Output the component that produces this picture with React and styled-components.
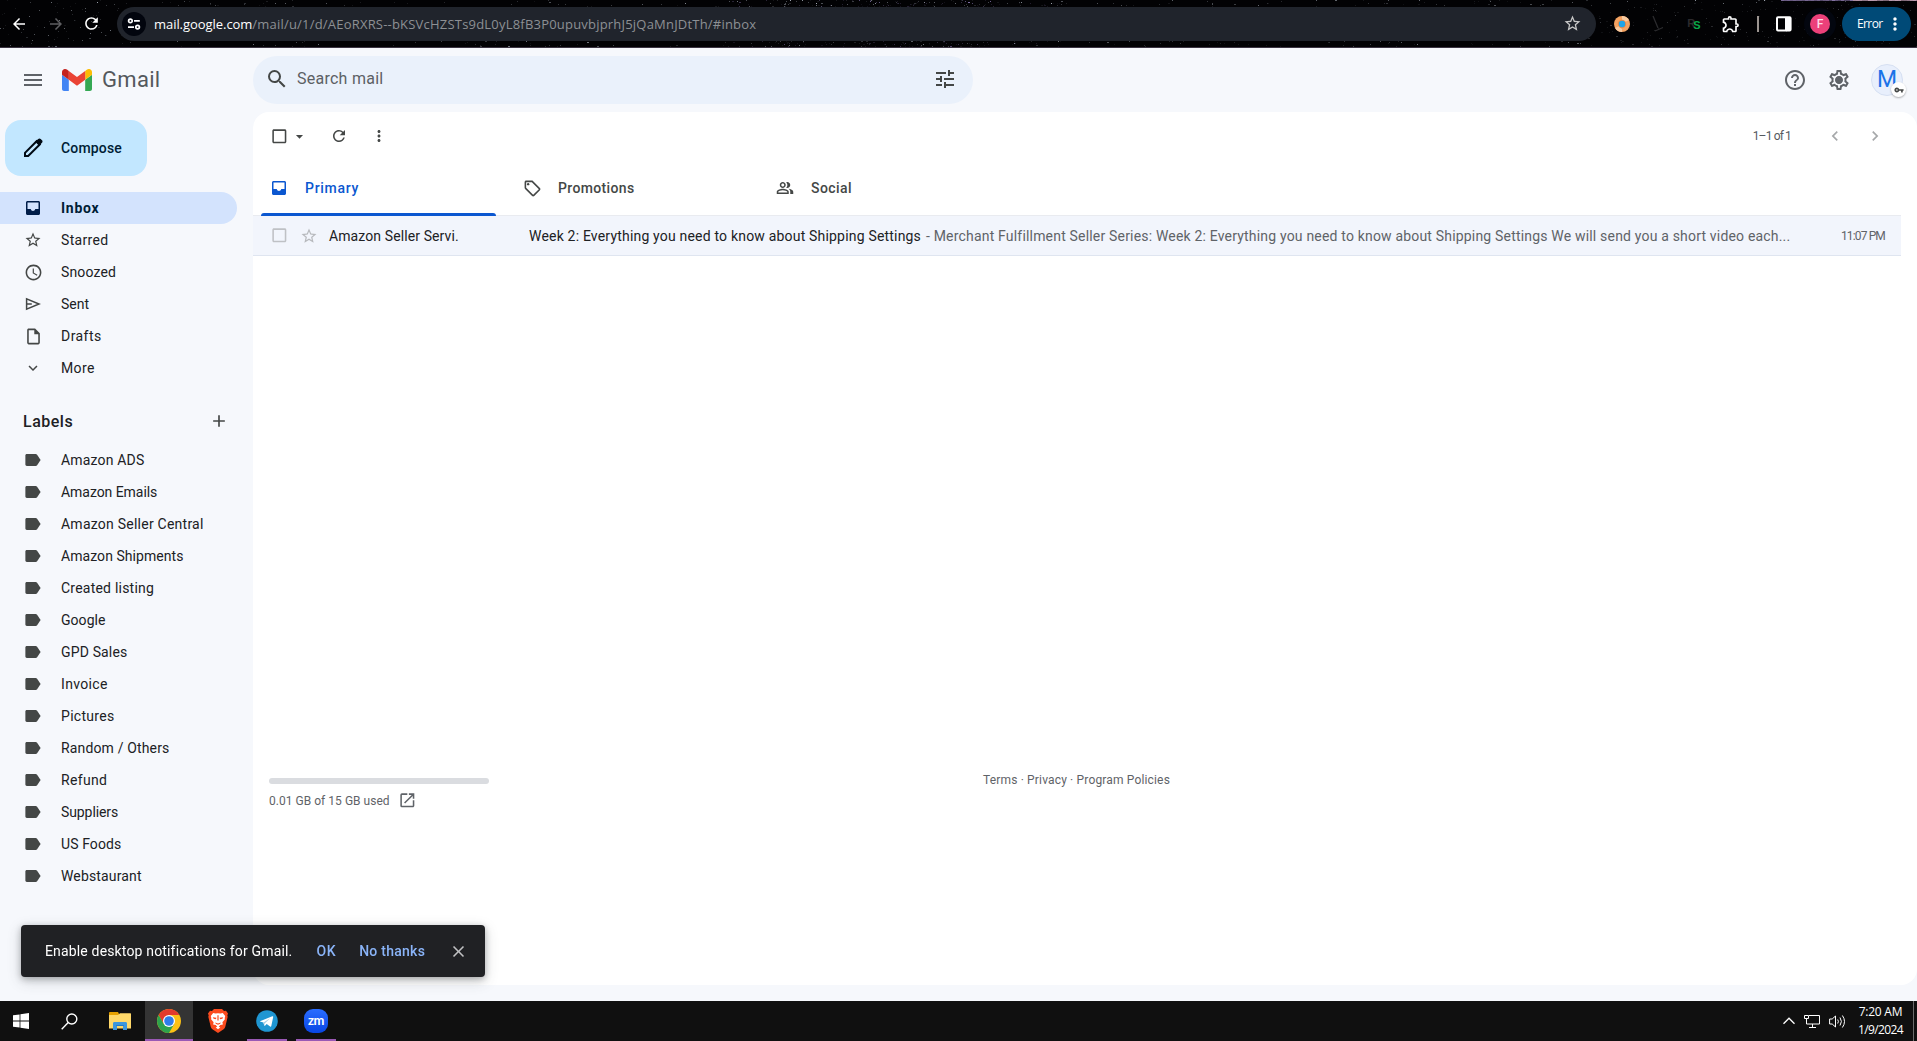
import React from "react";
import styled, { createGlobalStyle, css } from "styled-components";
import {
  MdMenu, MdSearch, MdTune, MdStarBorder, MdSchedule,
  MdOutlineInsertDriveFile, MdExpandMore, MdAdd, MdCheckBoxOutlineBlank,
  MdArrowDropDown, MdRefresh, MdMoreVert, MdOutlineSell, MdOutlinePeopleAlt,
  MdChevronLeft, MdChevronRight, MdHelpOutline, MdOutlineSettings, MdOpenInNew,
  MdClose, MdArrowBack, MdArrowForward, MdOutlineExtension, MdVpnKey,
} from "react-icons/md";

const Global = createGlobalStyle`
  * { box-sizing: border-box; }
  body { margin: 0; overflow: hidden; font-family: Roboto, "Liberation Sans", sans-serif; }
  svg { display: block; flex: none; }
`;

const Screen = styled.div`
  display: flex;
  flex-direction: column;
  width: 1917px;
  height: 1041px;
  overflow: hidden;
  background: #f6f8fc;
`;

/* Text with tracking */
const Text = styled.span`
  letter-spacing: ${(p) => p.$track || 0}px;
  white-space: nowrap;
`;

/* A fixed-width cell that centres its icon */
const Cell = styled.span`
  display: flex;
  flex: none;
  align-items: center;
  justify-content: center;
  width: ${(p) => p.$w}px;
  color: ${(p) => p.$color || "inherit"};
`;

/* ---------- browser bar ---------- */
const BrowserBar = styled.div`
  position: relative;
  display: flex;
  flex: none;
  align-items: center;
  height: 48px;
  background: #020204;
  border-bottom: 1px solid #3b3442;
  color: #fff;
`;
const Sky = styled.svg`
  position: absolute;
  inset: 0;
`;
const NavButtons = styled.div`
  position: relative;
  display: flex;
  width: 117px;
`;
const AddressBar = styled.div`
  position: relative;
  display: flex;
  align-items: center;
  width: 1479px;
  height: 34px;
  padding-left: 5px;
  border-radius: 17px;
  background: #20242c;
`;
const SiteButton = styled.span`
  display: flex;
  align-items: center;
  justify-content: center;
  width: 24px;
  height: 24px;
  margin-right: 8px;
  border-radius: 50%;
  background: #02050e;
`;
const Url = styled.div`
  flex: 1;
  display: flex;
  font: 13px/18px "Open Sans", "Noto Sans", sans-serif;
  color: #8d9094;
`;
const Host = styled(Text)`color: #fff;`;
const Extensions = styled.div`
  position: relative;
  display: flex;
  align-items: center;
`;
const Separator = styled.i`
  width: 2px;
  height: 16px;
  background: #9b9490;
`;
const Profile = styled.span`
  display: flex;
  align-items: center;
  justify-content: center;
  width: 20px;
  height: 20px;
  border-radius: 50%;
  background: #ec407a;
  box-shadow: 0 0 0 6px #03060f;
  font: 500 12px/20px Roboto, sans-serif;
  color: #ffdbe8;
`;
const ErrorButton = styled.div`
  display: flex;
  align-items: center;
  width: 69px;
  height: 34px;
  margin-left: -4px;
  padding-left: 15px;
  border-radius: 17px;
  background: #004a77;
  font: 12px/16px "Open Sans", sans-serif;
`;

/* ---------- Gmail frame ---------- */
const Gmail = styled.div`
  display: flex;
  flex: 1;
  flex-direction: column;
  min-height: 0;
`;
const Header = styled.header`
  display: flex;
  flex: none;
  align-items: center;
  height: 64px;
  color: #5f6368;
`;
const Brand = styled.div`
  display: flex;
  align-items: center;
  width: 253px;
  padding-left: 21px;
`;
const BrandName = styled(Text)`
  margin-left: 10px;
  font-size: 22px;
  line-height: 28px;
  color: #54585d;
`;
const SearchBox = styled.div`
  display: flex;
  align-items: center;
  width: 720px;
  height: 48px;
  padding: 0 16px 2px 12px;
  border-radius: 24px;
  background: #eaf1fb;
  color: #444746;
`;
const SearchHint = styled(Text)`
  flex: 1;
  margin-left: 8px;
  padding-bottom: 1px;
  font-size: 16px;
  color: #5c6064;
`;
const HeaderActions = styled.div`
  display: flex;
  align-items: center;
  margin-left: auto;
  padding-right: 14px;
`;
const Avatar = styled.div`
  position: relative;
  display: flex;
  align-items: center;
  justify-content: center;
  width: 32px;
  height: 32px;
  margin-left: 10px;
  border-radius: 50%;
  border: 1px solid #d6e0f2;
  background: #e8effc;
  font: 23px/32px Roboto, sans-serif;
  color: #1a73e8;
`;
const KeyBadge = styled.span`
  position: absolute;
  right: -4px;
  bottom: -2px;
  display: flex;
  align-items: center;
  justify-content: center;
  width: 15px;
  height: 15px;
  border-radius: 50%;
  background: #fff;
  box-shadow: 0 1px 2px rgba(0, 0, 0, 0.3);
  color: #444746;
`;
const Body = styled.div`
  display: flex;
  flex: 1;
  min-height: 0;
`;

/* ---------- sidebar ---------- */
const Sidebar = styled.nav`
  display: flex;
  flex: none;
  flex-direction: column;
  width: 253px;
  padding-top: 8px;
  color: #202124;
`;
const Compose = styled.div`
  display: flex;
  align-items: center;
  width: 142px;
  height: 56px;
  margin: 0 0 16px 5px;
  padding-left: 16px;
  border-radius: 16px;
  background: #c2e7ff;
  font-size: 14px;
  font-weight: 500;
  color: #001d35;
`;
const ComposeLabel = styled(Text)`margin-left: 16px;`;
const NavRow = styled.div`
  display: flex;
  align-items: center;
  width: 237px;
  height: 32px;
  padding-left: 21px;
  border-radius: 0 16px 16px 0;
  font-size: 14px;
  ${(p) => p.$active && css`
    background: #d3e3fd;
    font-weight: 700;
    color: #001d35;
  `}
`;
const NavLabel = styled(Text)`margin-left: 16px;`;
const LabelsHeading = styled.div`
  display: flex;
  align-items: center;
  justify-content: space-between;
  height: 44px;
  margin: 15px 0 1px;
  padding: 0 24px 0 23px;
  font-size: 16px;
  font-weight: 500;
`;

/* ---------- main panel ---------- */
const Panel = styled.main`
  display: flex;
  flex: 1;
  flex-direction: column;
  height: 873px;
  border-radius: 16px;
  background: #fff;
`;
const Toolbar = styled.div`
  display: flex;
  align-items: center;
  height: 48px;
  padding-left: 14px;
  color: #444746;
`;
const Pager = styled.div`
  display: flex;
  align-items: center;
  margin-left: auto;
  padding-right: 22px;
  font-size: 12px;
  color: #55595e;
`;
const Range = styled(Text)`margin-right: 4px;`;
const Tabs = styled.div`
  display: flex;
  height: 56px;
  margin-right: 16px;
  border-bottom: 1px solid #e9ebf0;
`;
const Tab = styled.div`
  display: flex;
  flex-direction: column;
  justify-content: space-between;
  width: 253px;
  height: 56px;
  padding: 0 10px 0 8px;
  font-size: 14px;
  font-weight: 500;
  color: ${(p) => (p.$active ? "#0b57d0" : "#444746")};
  &::after {
    content: "";
    height: 3px;
    border-radius: 3px 3px 0 0;
    background: ${(p) => (p.$active ? "#0b57d0" : "transparent")};
  }
`;
const TabFace = styled.div`
  display: flex;
  align-items: center;
  height: 56px;
  margin-bottom: -3px;
  padding-left: 8px;
`;
const TabLabel = styled(Text)`margin-left: 16px;`;
const MailRow = styled.div`
  display: flex;
  align-items: center;
  height: 40px;
  margin-right: 16px;
  padding: 0 16px 0 14px;
  border-bottom: 1px solid #dfe5f0;
  background: #f2f5fc;
  font-size: 14px;
  color: #202124;
`;
const Sender = styled(Text)`
  width: 200px;
  margin-left: 3px;
`;
const Subject = styled(Text)`width: 397px;`;
const Snippet = styled(Text)`color: #5f6368;`;
const Time = styled(Text)`
  margin-left: auto;
  font-size: 12px;
  color: #5f6368;
`;
const Footer = styled.footer`
  display: flex;
  margin-top: 514px;
  font-size: 12px;
  line-height: 20px;
  color: #5f6368;
`;
const Storage = styled.div`
  width: 730px;
  padding: 8px 0 0 16px;
`;
const Meter = styled.div`
  width: 220px;
  height: 6px;
  margin-bottom: 7px;
  border-radius: 3px;
  background: #dadce0;
`;
const Usage = styled.div`
  display: flex;
  align-items: flex-start;
  gap: 8px;
`;

/* ---------- notification ---------- */
const Toast = styled.div`
  position: fixed;
  left: 21px;
  top: 925px;
  display: flex;
  align-items: center;
  width: 464px;
  height: 52px;
  padding-left: 24px;
  border-radius: 4px;
  background: #202124;
  box-shadow: 0 2px 6px rgba(60, 64, 67, 0.35), 0 4px 14px rgba(60, 64, 67, 0.22);
  font-size: 14px;
  color: #fff;
`;
const ToastAction = styled(Text)`
  margin-left: ${(p) => p.$gap}px;
  font-weight: 500;
  color: #8ab4f8;
`;

/* ---------- taskbar ---------- */
const Taskbar = styled.div`
  display: flex;
  flex: none;
  height: 40px;
  background: #101010;
  color: #fff;
`;
const Task = styled.div`
  display: flex;
  align-items: center;
  justify-content: center;
  width: ${(p) => p.$w}px;
  margin-left: ${(p) => p.$ml || 0}px;
  background: ${(p) => (p.$active ? "#343434" : "transparent")};
  box-shadow: ${(p) => (p.$open ? "inset 0 -2px #9a59b5" : "none")};
`;
const Tray = styled.div`
  display: flex;
  align-items: center;
  gap: 9px;
  margin-left: auto;
`;
const Clock = styled.div`
  display: flex;
  flex-direction: column;
  align-items: center;
  width: 47px;
  margin: 0 1px 1px 2px;
  font: 12px/18px "Open Sans", "Noto Sans", sans-serif;
`;
const ShowDesktop = styled.i`
  width: 4px;
  height: 40px;
  margin-left: -1px;
  border-left: 1px solid #6c6c6c;
`;

/* ---------- drawings ---------- */
function stars() {
  const out = [];
  let seed = 7;
  const rnd = () => {
    seed = (seed * 16807) % 2147483647;
    return seed / 2147483647;
  };
  for (let i = 0; i < 1900; i += 1) {
    const cluster = i > 1150;
    const x = Math.floor(cluster ? 700 + (rnd() + rnd()) * 200 : rnd() * 1917);
    const y = Math.floor(rnd() * 47);
    const bright = y < 4 ? 0.9 : x > 1600 ? 0.25 : 0.55;
    const purple = cluster && rnd() > 0.4;
    out.push(<rect key={i} x={x} y={y} width={rnd() > 0.85 ? 2 : 1} height="1" fill={purple ? "#9a86c8" : "#c8d0dc"} opacity={(rnd() * rnd() * bright + 0.07).toFixed(2)} />);
  }
  for (let x = 1781; x < 1917; x += 3) {
    out.push(<rect key={`p${x}`} x={x} y="0" width="3" height="1" fill={x > 1850 ? "#c9a6bc" : "#8573a3"} opacity={(0.6 + rnd() * 0.4).toFixed(2)} />);
  }
  return out;
}

const GmailLogoSvg = styled.svg`margin-left: 17px;`;
const GmailLogo = () => (
  <GmailLogoSvg width="30" height="22" viewBox="52 42 88 66" preserveAspectRatio="none">
    <path fill="#4285f4" d="M58 108h14V74L52 59v43c0 3.32 2.69 6 6 6" />
    <path fill="#34a853" d="M120 108h14c3.32 0 6-2.69 6-6V59l-20 15" />
    <path fill="#fbbc04" d="M120 48v26l20-15v-8c0-7.42-8.47-11.65-14.4-7.2" />
    <path fill="#ea4335" d="M72 74V48l24 18 24-18v26L96 92" />
    <path fill="#c5221f" d="M52 51v8l20 15V48l-5.6-4.2c-5.94-4.45-14.4-.22-14.4 7.2" />
  </GmailLogoSvg>
);
const Pencil = () => (
  <svg width="24" height="24" viewBox="0 0 24 24">
    <path fill="none" stroke="#000a14" strokeWidth="2" strokeLinejoin="miter" d="M4 20v-3.2L15.6 5.2l3.2 3.2L7.2 20z" />
    <path fill="#000a14" d="M14.2 5.8l3-2.9c.8-.7 1.8-.7 2.5 0l1.3 1.3c.7.7.7 1.8 0 2.5l-3 3z" />
  </svg>
);
const InboxIcon = () => (
  <svg width="14" height="14" viewBox="0 0 14 14" fill="currentColor">
    <path fillRule="evenodd" d="M1.500 0h11C13.300 0 14 .7 14 1.500v11c0 .8-.7 1.500-1.500 1.500h-11C.7 14 0 13.300 0 12.500v-11C0 .7.7 0 1.500 0zM1.500 1.500V8h3.200c.3 1.200 1.200 2 2.300 2s2-.8 2.300-2h3.200V1.500z" />
  </svg>
);
const LabelIcon = () => (
  <svg width="16" height="12" viewBox="0 0 16 12" fill="#444746">
    <path d="M1.800 0h8.900c.6 0 1 .2 1.400.7L15.600 6l-3.500 5.300c-.4.5-.8.7-1.400.7H1.800C1 12 .4 11.400.4 10.600V1.400C.4.6 1 0 1.800 0z" />
  </svg>
);
const SendIcon = () => (
  <svg width="16" height="14" viewBox="0 0 16 14" fill="none" stroke="#444746" strokeWidth="1.5">
    <path d="M1.600 1.900v10.200L14 7zM1.600 7h5.200" />
  </svg>
);
const SiteIcon = () => (
  <svg width="14" height="14" viewBox="0 0 14 14" fill="none" stroke="#fff" strokeWidth="1.700">
    <circle cx="3.400" cy="3.900" r="1.800" /><path d="M7 3.900h5.800M1 10.100h6" /><circle cx="10.600" cy="10.100" r="1.800" />
  </svg>
);
const SidePanelIcon = () => (
  <svg width="16" height="16" viewBox="0 0 16 16">
    <rect x="1" y="1.200" width="13.600" height="13.400" rx="1" fill="none" stroke="#fff" strokeWidth="2" />
    <path fill="#fff" d="M9 1h6v14H9z" />
  </svg>
);
const OrangeDisc = () => (
  <svg width="16" height="16" viewBox="0 0 16 16">
    <circle cx="8" cy="8" r="8" fill="#f4a261" />
    <path fill="#f7c99f" d="M8 0a8 8 0 0 1 7 4l-4 2-3-2zM1 12l4-2 3 3v3a8 8 0 0 1-7-4z" />
    <circle cx="8" cy="8" r="4.200" fill="#e98a4b" />
    <circle cx="8" cy="8" r="3.200" fill="#1ea4e8" />
  </svg>
);
const DimMark = () => (
  <svg width="12" height="18" viewBox="0 0 12 18" fill="none" stroke="#2b2b2e" strokeWidth="1.300">
    <path d="M1 1l5 12M3 16l8-3.500" />
  </svg>
);
const ExtensionLetters = styled.span`
  display: flex;
  font: 700 11px/14px "Liberation Sans", sans-serif;
  color: #2c2a2d;
`;
const GreenLetter = styled.b`
  margin: 2px 0 0 -2px;
  color: #08a94b;
`;
const WindowsLogo = () => (
  <svg width="16" height="16" viewBox="0 0 16 16" fill="#fff">
    <path d="M0 2.300L6.600 1.400V7.600H0zM7.400 1.300L16 0v7.600H7.400zM0 8.400h6.600v6.200L0 13.700zM7.400 8.400H16V16l-8.600-1.300z" />
  </svg>
);
const TaskSearch = () => (
  <svg width="17" height="17" viewBox="0 0 17 17" fill="none" stroke="#fff" strokeWidth="1.400">
    <circle cx="10.800" cy="6" r="5" /><path d="M7.200 9.600L.7 16.200" />
  </svg>
);
const FolderIcon = () => (
  <svg width="22" height="18" viewBox="0 0 22 18">
    <path fill="#e6a100" d="M0 1.200C0 .5.4 0 1 0h8l1 2v2H0z" />
    <path fill="#ffd869" d="M0 3h9l2-1.800h10.400c.4 0 .6.3.6.6V16.600H0z" />
    <path fill="#3d96dc" d="M4 18v-6.600c0-.8.6-1.400 1.400-1.400h11.200c.8 0 1.400.6 1.400 1.400V18h-4v-4H8v4z" />
    <path fill="#1c74c4" d="M7.200 13.200h7.600V14H7.200z" />
  </svg>
);
const ChromeIcon = () => (
  <svg width="24" height="24" viewBox="0 0 24 24">
    <circle cx="12" cy="12" r="12" fill="#fbc116" />
    <path fill="#e33b2e" d="M1.610 6A12 12 0 0 1 22.390 6H12L6.800 15z" />
    <path fill="#2da24c" d="M1.610 6A12 12 0 0 0 12 24l5.200-9L12 12 6.800 15z" />
    <circle cx="12" cy="12" r="6" fill="#fff" />
    <circle cx="12" cy="12" r="4.800" fill="#2f7de9" />
  </svg>
);
const BraveIcon = () => (
  <svg width="20" height="24" viewBox="0 0 20 24">
    <path fill="#fb4b1e" d="M6 0h8l2 2 2-.2L20 4.500l-.7 2 .4 1.300-2.500 10.200c-.3 1-.8 1.700-1.600 2.300L10 24l-5.600-3.700c-.8-.6-1.300-1.300-1.600-2.300L.3 7.800l.4-1.300-.7-2L2 1.800 4 2z" />
    <path fill="#fff" d="M5.200 4.100l2.300.5L10 4.200l2.500.4 2.300-.5 2.400 3-.5 1.900.2 1.300-2.500 3 .5 2.100-2.700.6L10 18.700 7.800 16l-2.700-.6.500-2.100-2.500-3 .2-1.300-.5-1.900z" />
    <path fill="#fb4b1e" d="M4.800 8.200l3.700.5-.7 1.500-2.200-.4zM15.200 8.200l-3.700.5.7 1.500 2.200-.4zM9.400 6.300h1.200v5.200H9.400zM7.200 13.400l2.800 1 2.800-1-.6 1.300L10 15.700l-2.200-1z" />
    <path fill="#fff" d="M10 17.200l2.300 1.400L10 20.200l-2.300-1.600z" />
  </svg>
);
const TelegramIcon = () => (
  <svg width="22" height="22" viewBox="0 0 22 22">
    <circle cx="11" cy="11" r="10.800" fill="#1f96d2" />
    <path fill="#fff" d="M4 11.200l12.300-5c.7-.2 1 .1.900.8l-1.900 9.100c-.2.700-.7.800-1.200.4l-3.400-2.400-1.700 1.600c-.3.300-.7.200-.8-.2L7.400 12.600 4 11.600z" />
    <path fill="#a9cfe6" d="M7.400 12.600l6.800-4.300-5.500 5.300-.4 2z" />
  </svg>
);
const ZoomTile = styled.span`
  display: flex;
  align-items: center;
  justify-content: center;
  width: 24px;
  height: 24px;
  padding-bottom: 3px;
  border-radius: 9px;
  background: linear-gradient(#2a6dff, #0846e4);
  font: 700 13px/20px Lato, sans-serif;
  letter-spacing: -0.4px;
  color: #fff;
`;
const CaretUp = () => (
  <svg width="12" height="8" viewBox="0 0 12 8" fill="none" stroke="#fff" strokeWidth="1.300"><path d="M.5 6.700L6 1.200l5.500 5.500" /></svg>
);
const NetworkIcon = () => (
  <svg width="16" height="15" viewBox="0 0 16 15" fill="none" stroke="#fff">
    <path d="M5 1.500h10.500v8.500H2.500V6M8.500 10v3M5 13.500h7M.5 1.500h4v3h-4zM2.500 4.500v2" />
  </svg>
);
const SpeakerIcon = () => (
  <svg width="17" height="15" viewBox="0 0 17 15" fill="none" stroke="#fff">
    <path d="M.6 5h2.600L6.500 2v11L3.200 10H.6zM8.700 5.500q1.400 2 0 4M11 3.500q2.800 4 0 8M13.400 1.500q4.200 6 0 12" />
  </svg>
);

const folders = [
  { name: "Inbox", icon: <InboxIcon />, track: 0.73, active: true },
  { name: "Starred", icon: <MdStarBorder size={18} />, track: 0.33 },
  { name: "Snoozed", icon: <MdSchedule size={19} />, track: 0.14 },
  { name: "Sent", icon: <SendIcon />, track: 0 },
  { name: "Drafts", icon: <MdOutlineInsertDriveFile size={19} />, track: 0.45 },
  { name: "More", icon: <MdExpandMore size={18} />, track: 0.39 },
];
const labels = [
  ["Amazon ADS", 0.18], ["Amazon Emails", -0.05], ["Amazon Seller Central", 0.24],
  ["Amazon Shipments", 0.06], ["Created listing", 0.22], ["Google", 0.05],
  ["GPD Sales", 0.15], ["Invoice", 0.34], ["Pictures", 0.3], ["Random / Others", 0.15],
  ["Refund", 0.32], ["Suppliers", -0.09], ["US Foods", 0.1], ["Webstaurant", 0.155],
];
const tabs = [
  { name: "Primary", icon: <InboxIcon />, track: 0.7, active: true },
  { name: "Promotions", icon: <MdOutlineSell size={19} />, track: 0.36 },
  { name: "Social", icon: <MdOutlinePeopleAlt size={18} />, track: 0.43 },
];

function Browser() {
  return (
    <BrowserBar>
      <Sky width="1917" height="47">{stars()}</Sky>
      <NavButtons>
        <Cell $w={38}><MdArrowBack size={18} /></Cell>
        <Cell $w={35} $color="#5f5f62"><MdArrowForward size={18} /></Cell>
        <Cell $w={36}><MdRefresh size={19} /></Cell>
      </NavButtons>
      <AddressBar>
        <SiteButton><SiteIcon /></SiteButton>
        <Url>
          <Host $track={-0.05}>mail.google.com</Host>
          <Text $track={0.205}>/mail/u/1/d/AEoRXRS--bKSVcHZSTs9dL0yL8fB3P0upuvbjprhJ5jQaMnJDtTh/#inbox</Text>
        </Url>
        <Cell $w={48} $color="#c7c7c7"><MdStarBorder size={19} /></Cell>
      </AddressBar>
      <Extensions>
        <Cell $w={52}><OrangeDisc /></Cell>
        <Cell $w={20}><DimMark /></Cell>
        <Cell $w={52}><ExtensionLetters>R<GreenLetter>S</GreenLetter></ExtensionLetters></Cell>
        <Cell $w={22}><MdOutlineExtension size={20} /></Cell>
        <Cell $w={32}><Separator /></Cell>
        <Cell $w={20}><SidePanelIcon /></Cell>
        <Cell $w={52}><Profile>F</Profile></Cell>
        <ErrorButton>
          <Text $track={-0.6}>Error</Text>
          <Cell $w={24}><MdMoreVert size={20} /></Cell>
        </ErrorButton>
      </Extensions>
    </BrowserBar>
  );
}

function SideNav() {
  return (
    <Sidebar>
      <Compose>
        <Pencil />
        <ComposeLabel $track={0.18}>Compose</ComposeLabel>
      </Compose>
      {folders.map((f) => (
        <NavRow key={f.name} $active={f.active}>
          <Cell $w={24} $color={f.active ? "#001d48" : "#444746"}>{f.icon}</Cell>
          <NavLabel $track={f.track}>{f.name}</NavLabel>
        </NavRow>
      ))}
      <LabelsHeading>
        <Text $track={0.5}>Labels</Text>
        <MdAdd size={20} color="#444746" />
      </LabelsHeading>
      {labels.map(([name, track]) => (
        <NavRow key={name}>
          <Cell $w={24}><LabelIcon /></Cell>
          <NavLabel $track={track}>{name}</NavLabel>
        </NavRow>
      ))}
    </Sidebar>
  );
}

function MailPanel() {
  return (
    <Panel>
      <Toolbar>
        <Cell $w={24}><MdCheckBoxOutlineBlank size={18.667} /></Cell>
        <Cell $w={16}><MdArrowDropDown size={17} /></Cell>
        <Cell $w={64}><MdRefresh size={18} /></Cell>
        <Cell $w={16}><MdMoreVert size={18} /></Cell>
        <Pager>
          <Range $track={-0.85}>1–1 of 1</Range>
          <Cell $w={80} $color="#a6a8aa"><MdChevronLeft size={20} /></Cell>
          <Cell $w={0} $color="#a6a8aa"><MdChevronRight size={20} /></Cell>
          <Cell $w={20} />
        </Pager>
      </Toolbar>
      <Tabs>
        {tabs.map((t) => (
          <Tab key={t.name} $active={t.active}>
            <TabFace>
              <Cell $w={20}>{t.icon}</Cell>
              <TabLabel $track={t.track}>{t.name}</TabLabel>
            </TabFace>
          </Tab>
        ))}
      </Tabs>
      <MailRow>
        <Cell $w={24} $color="#bfc1c5"><MdCheckBoxOutlineBlank size={18.667} /></Cell>
        <Cell $w={35} $color="#b7b9bd"><MdStarBorder size={18} /></Cell>
        <Sender $track={0.1}>Amazon Seller Servi.</Sender>
        <Subject $track={0.19}>Week 2: Everything you need to know about Shipping Settings</Subject>
        <Snippet $track={0.185}>- Merchant Fulfillment Seller Series: Week 2: Everything you need to know about Shipping Settings We will send you a short video each...</Snippet>
        <Time $track={-0.85}>11:07 PM</Time>
      </MailRow>
      <Footer>
        <Storage>
          <Meter />
          <Usage>
            <Text $track={0.03}>0.01 GB of 15 GB used</Text>
            <MdOpenInNew size={18.667} />
          </Usage>
        </Storage>
        <Text $track={0.16}>Terms · Privacy · Program Policies</Text>
      </Footer>
    </Panel>
  );
}

export default function App() {
  return (
    <Screen>
      <Global />
      <Browser />
      <Gmail>
        <Header>
          <Brand>
            <MdMenu size={24} />
            <GmailLogo />
            <BrandName $track={0.3}>Gmail</BrandName>
          </Brand>
          <SearchBox>
            <MdSearch size={24} />
            <SearchHint $track={0.256}>Search mail</SearchHint>
            <MdTune size={24} />
          </SearchBox>
          <HeaderActions>
            <Cell $w={44}><MdHelpOutline size={24} /></Cell>
            <Cell $w={44}>
              <svg width="24" height="24" viewBox="0 0 24 24">
                <MdOutlineSettings size={24} />
                <circle cx="12" cy="12" r="3.400" fill="currentColor" />
              </svg>
            </Cell>
            <Avatar>
              M
              <KeyBadge><MdVpnKey size={10} /></KeyBadge>
            </Avatar>
          </HeaderActions>
        </Header>
        <Body>
          <SideNav />
          <MailPanel />
        </Body>
      </Gmail>
      <Toast>
        <Text $track={0.16}>Enable desktop notifications for Gmail.</Text>
        <ToastAction $gap={24} $track={0.6}>OK</ToastAction>
        <ToastAction $gap={23} $track={0.26}>No thanks</ToastAction>
        <Cell $w={66} $color="#c0c1c3"><MdClose size={19} /></Cell>
      </Toast>
      <Taskbar>
        <Task $w={42}><WindowsLogo /></Task>
        <Task $w={54}><TaskSearch /></Task>
        <Task $w={48}><FolderIcon /></Task>
        <Task $w={48} $ml={1} $active $open><ChromeIcon /></Task>
        <Task $w={50}><BraveIcon /></Task>
        <Task $w={40} $ml={4} $open><TelegramIcon /></Task>
        <Task $w={40} $ml={9} $open><ZoomTile>zm</ZoomTile></Task>
        <Tray>
          <CaretUp />
          <NetworkIcon />
          <SpeakerIcon />
          <Clock>
            <Text $track={-0.24}>7:20 AM</Text>
            <Text $track={-0.59}>1/9/2024</Text>
          </Clock>
          <ShowDesktop />
        </Tray>
      </Taskbar>
    </Screen>
  );
}
